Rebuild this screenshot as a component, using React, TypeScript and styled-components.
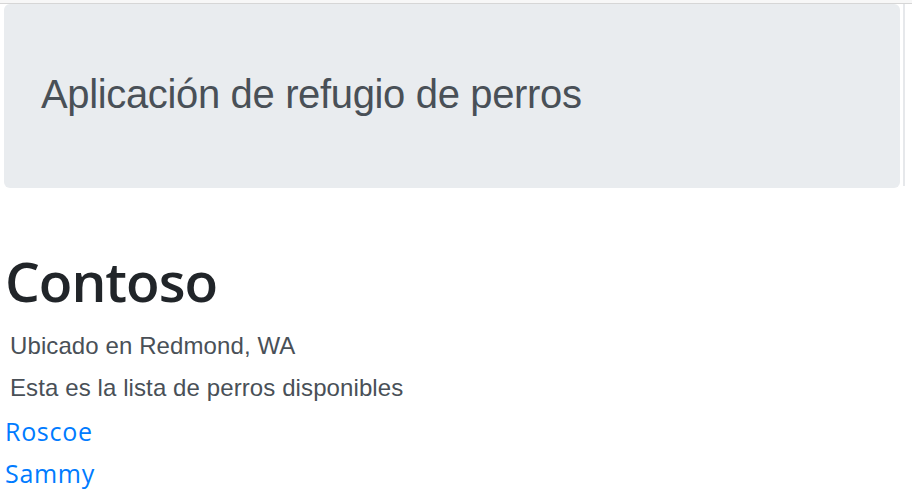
import React from "react";
import styled, { createGlobalStyle } from "styled-components";

const Global = createGlobalStyle`
  html, body { margin: 0; padding: 0; background: #ffffff; }
  body { font-family: "Liberation Sans", Arial, sans-serif; }
`;

const Page = styled.div`
  width: 912px;
  min-height: 491px;
  display: flex;
  flex-direction: column;
`;

const TopStrip = styled.div`
  height: 3px;
  background: #f7f7f7;
  border-bottom: 1px solid #d6d6d6;
`;

const HeaderRow = styled.div`
  display: flex;
  align-items: flex-start;
  padding-left: 4px;
  gap: 3px;
`;

const Jumbotron = styled.header`
  width: 896px;
  height: 184px;
  box-sizing: border-box;
  background: #e9ecef;
  border-radius: 6px;
  padding: 66px 0 0 37px;
`;

const Edge = styled.div`
  width: 2px;
  height: 182px;
  background: #e6e8eb;
`;

const AppTitle = styled.h1`
  margin: 0;
  font-family: "Liberation Sans", Arial, sans-serif;
  font-weight: 400;
  font-size: 40px;
  line-height: 48px;
  letter-spacing: -0.35px;
  color: #495057;
`;

const Main = styled.main`
  display: flex;
  flex-direction: column;
  padding: 59px 0 0 5px;
`;

const Brand = styled.h2`
  margin: 0 0 11px 0;
  font-family: "Open Sans", "Noto Sans", sans-serif;
  font-weight: 600;
  font-size: 55px;
  line-height: 67px;
  color: #212529;
  letter-spacing: -1px;
`;

const Info = styled.p`
  margin: 0;
  padding-left: 5px;
  font-family: "Liberation Sans", Arial, sans-serif;
  font-size: 24px;
  line-height: 42px;
  letter-spacing: 0.1px;
  color: #495057;
`;

const DogList = styled.div`
  display: flex;
  flex-direction: column;
  margin-top: 1px;
`;

const DogLink = styled.a`
  font-family: "Open Sans", "Noto Sans", sans-serif;
  font-size: 25px;
  line-height: 42px;
  letter-spacing: 0.7px;
  color: #007bff;
  text-decoration: none;
`;

const dogs = ["Roscoe", "Sammy"];

export default function App() {
  return (
    <Page>
      <Global />
      <TopStrip />
      <HeaderRow>
        <Jumbotron>
          <AppTitle>Aplicación de refugio de perros</AppTitle>
        </Jumbotron>
        <Edge />
      </HeaderRow>
      <Main>
        <Brand>Contoso</Brand>
        <Info>Ubicado en Redmond, WA</Info>
        <Info>Esta es la lista de perros disponibles</Info>
        <DogList>
          {dogs.map((d) => (
            <DogLink key={d} href="#">
              {d}
            </DogLink>
          ))}
        </DogList>
      </Main>
    </Page>
  );
}
